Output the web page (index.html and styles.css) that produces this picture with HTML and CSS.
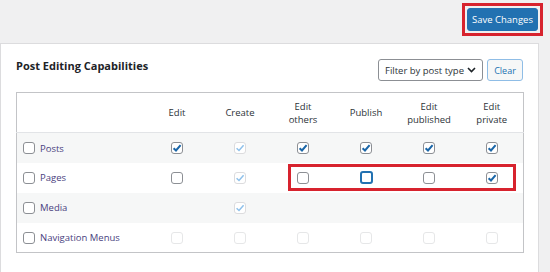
FILE: index.html
```html
<!DOCTYPE html>
<html>
<head>
<meta charset="utf-8">
<link rel="stylesheet" href="styles.css">
</head>
<body>
<div class="topbar">
  <div class="annot-save">
    <button class="btn-primary">Save Changes</button>
  </div>
</div>
<div class="card">
  <div class="card-head">
    <h2 class="title">Post Editing Capabilities</h2>
    <div class="filters">
      <div class="select">
        <span>Filter by post type</span>
        <svg class="chev" width="9" height="6" viewBox="0 0 9 6"><path d="M1 1 L4.5 4.5 L8 1" fill="none" stroke="#1d2327" stroke-width="1.6"/></svg>
      </div>
      <button class="btn-secondary">Clear</button>
    </div>
  </div>
  <div class="table-wrap">
    <table class="caps">
      <colgroup>
        <col class="c-name"><col class="c"><col class="c"><col class="c"><col class="c"><col class="c"><col class="c">
      </colgroup>
      <thead>
        <tr>
          <th></th>
          <th>Edit</th>
          <th>Create</th>
          <th>Edit<br>others</th>
          <th>Publish</th>
          <th>Edit<br>published</th>
          <th>Edit<br>private</th>
        </tr>
      </thead>
      <tbody>
        <tr class="alt">
          <td class="name"><span class="cb"></span><span class="lbl">Posts</span></td>
          <td><span class="cb on"><svg viewBox="0 0 12 12"><path d="M2.6 6.2 L5 8.5 L9.6 3.2"/></svg></span></td>
          <td><span class="cb dis on"><svg viewBox="0 0 12 12"><path d="M2.6 6.2 L5 8.5 L9.6 3.2"/></svg></span></td>
          <td><span class="cb on"><svg viewBox="0 0 12 12"><path d="M2.6 6.2 L5 8.5 L9.6 3.2"/></svg></span></td>
          <td><span class="cb on"><svg viewBox="0 0 12 12"><path d="M2.6 6.2 L5 8.5 L9.6 3.2"/></svg></span></td>
          <td><span class="cb on"><svg viewBox="0 0 12 12"><path d="M2.6 6.2 L5 8.5 L9.6 3.2"/></svg></span></td>
          <td><span class="cb on"><svg viewBox="0 0 12 12"><path d="M2.6 6.2 L5 8.5 L9.6 3.2"/></svg></span></td>
        </tr>
        <tr>
          <td class="name"><span class="cb"></span><span class="lbl">Pages</span></td>
          <td><span class="cb"></span></td>
          <td><span class="cb dis on"><svg viewBox="0 0 12 12"><path d="M2.6 6.2 L5 8.5 L9.6 3.2"/></svg></span></td>
          <td><span class="cb"></span></td>
          <td><span class="cb focus"></span></td>
          <td><span class="cb"></span></td>
          <td><span class="cb on"><svg viewBox="0 0 12 12"><path d="M2.6 6.2 L5 8.5 L9.6 3.2"/></svg></span></td>
        </tr>
        <tr class="alt">
          <td class="name"><span class="cb"></span><span class="lbl">Media</span></td>
          <td></td>
          <td><span class="cb dis on"><svg viewBox="0 0 12 12"><path d="M2.6 6.2 L5 8.5 L9.6 3.2"/></svg></span></td>
          <td></td>
          <td></td>
          <td></td>
          <td></td>
        </tr>
        <tr>
          <td class="name"><span class="cb"></span><span class="lbl">Navigation Menus</span></td>
          <td><span class="cb faint"></span></td>
          <td><span class="cb faint"></span></td>
          <td><span class="cb faint"></span></td>
          <td><span class="cb faint"></span></td>
          <td><span class="cb faint"></span></td>
          <td><span class="cb faint"></span></td>
        </tr>
      </tbody>
    </table>
    <div class="annot-row"></div>
  </div>
</div>
</body>
</html>
```
FILE: styles.css
```css
* { box-sizing: border-box; }
html, body { margin: 0; padding: 0; }
body {
  width: 550px;
  height: 272px;
  overflow: hidden;
  background: #f0f0f1;
  font-family: "Open Sans", "Noto Sans", sans-serif;
  color: #2c3338;
}
.topbar {
  height: 43px;
  display: flex;
  justify-content: flex-end;
  align-items: flex-start;
  padding: 3px 7px 0 0;
}
.annot-save {
  border: 3px solid #d7232e;
  padding: 2px;
}
.btn-primary {
  display: block;
  width: 71px;
  height: 23px;
  background: #2271b1;
  border: 1px solid #2271b1;
  border-radius: 3px;
  color: #fff;
  font-family: inherit;
  font-size: 9.5px;
  padding: 0;
  line-height: 21px;
}
.card {
  margin: 0 11px 0 0;
  background: #fff;
  border: 1px solid #dcdcde;
  border-bottom: 0;
  height: 229px;
  padding: 15px 15px 0 15px;
}
.card-head {
  display: flex;
  justify-content: space-between;
  align-items: flex-start;
  height: 22px;
}
.title {
  margin: 0;
  font-size: 11px;
  line-height: 14px;
  font-weight: 700;
  color: #1d2327;
}
.filters {
  display: flex;
  gap: 4px;
}
.select {
  width: 105px;
  height: 22px;
  border: 1px solid #8c8f94;
  border-radius: 3px;
  display: flex;
  align-items: center;
  justify-content: space-between;
  padding: 0 6px 0 6px;
  font-size: 9.5px;
  color: #2c3338;
}
.chev { display: block; }
.btn-secondary {
  width: 36px;
  height: 22px;
  border: 1px solid #8fbde6;
  border-radius: 3px;
  background: #f6f7f7;
  color: #2271b1;
  font-family: inherit;
  font-size: 9px;
  padding: 0;
}
.table-wrap {
  position: relative;
  margin-top: 11px;
}
.caps {
  width: 507px;
  border-collapse: collapse;
  table-layout: fixed;
  border: 1px solid #c3c4c7;
  font-size: 9.5px;
}
.c-name { width: 129px; }
.c { width: 63px; }
.caps th {
  height: 40px;
  font-weight: 400;
  line-height: 13px;
  color: #2c3338;
  text-align: center;
  vertical-align: middle;
  padding: 0;
  border-bottom: 1px solid #e2e4e7;
}
.caps td {
  height: 30px;
  padding: 0;
  text-align: center;
  vertical-align: middle;
}
.caps tr.alt td { background: #f6f7f7; }
.caps td.name {
  text-align: left;
  padding-left: 6px;
}
.name .lbl {
  color: #4a3f80;
  margin-left: 5px;
  vertical-align: middle;
}
.cb {
  display: inline-block;
  width: 12px;
  height: 12px;
  border: 1px solid #8c8f94;
  border-radius: 3px;
  background: #fff;
  vertical-align: middle;
  position: relative;
}
.cb svg {
  position: absolute;
  left: -1px;
  top: -1px;
  width: 12px;
  height: 12px;
}
.cb svg path {
  fill: none;
  stroke: #1a66a8;
  stroke-width: 2;
}
.cb.dis { border-color: #dcdcde; }
.cb.dis svg path { stroke: #8ec0ea; stroke-width: 1.5; }
.cb.faint { border-color: #e6e7e8; }
.cb.focus {
  width: 13px;
  height: 13px;
  border: 2px solid #2271b1;
}
.annot-row {
  position: absolute;
  left: 272px;
  top: 72px;
  width: 228px;
  height: 27px;
  border: 3px solid #d7232e;
}
```
